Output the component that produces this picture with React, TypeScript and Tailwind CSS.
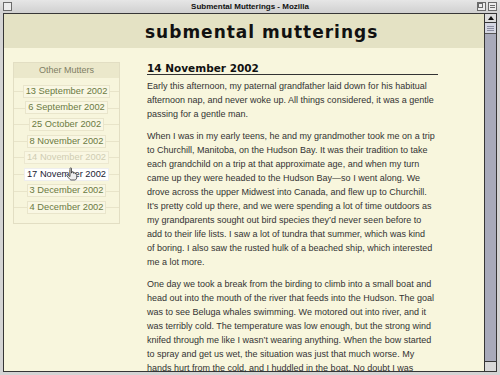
import React from "react";

const P1 = [
  "Early this afternoon, my paternal grandfather laid down for his habitual",
  "afternoon nap, and never woke up. All things considered, it was a gentle",
  "passing for a gentle man.",
];
const P2 = [
  "When I was in my early teens, he and my grandmother took me on a trip",
  "to Churchill, Manitoba, on the Hudson Bay. It was their tradition to take",
  "each grandchild on a trip at that approximate age, and when my turn",
  "came up they were headed to the Hudson Bay\u2014so I went along. We",
  "drove across the upper Midwest into Canada, and flew up to Churchill.",
  "It\u2019s pretty cold up there, and we were spending a lot of time outdoors as",
  "my grandparents sought out bird species they\u2019d never seen before to",
  "add to their life lists. I saw a lot of tundra that summer, which was kind",
  "of boring. I also saw the rusted hulk of a beached ship, which interested",
  "me a lot more.",
];
const P3 = [
  "One day we took a break from the birding to climb into a small boat and",
  "head out into the mouth of the river that feeds into the Hudson. The goal",
  "was to see Beluga whales swimming. We motored out into river, and it",
  "was terribly cold. The temperature was low enough, but the strong wind",
  "knifed through me like I wasn\u2019t wearing anything. When the bow started",
  "to spray and get us wet, the situation was just that much worse. My",
  "hands hurt from the cold, and I huddled in the boat. No doubt I was",
];

const ITEMS = [
  { t: "13 September 2002", s: "normal" },
  { t: "6 September 2002", s: "normal" },
  { t: "25 October 2002", s: "normal" },
  { t: "8 November 2002", s: "normal" },
  { t: "14 November 2002", s: "current" },
  { t: "17 November 2002", s: "hover" },
  { t: "3 December 2002", s: "normal" },
  { t: "4 December 2002", s: "normal" },
];

function Para({ lines, first }: { lines: string[]; first?: boolean }) {
  return (
    <p className={`${first ? "mt-[4px]" : "mt-[8px]"} text-[9px] leading-[14px] text-[#333333] whitespace-nowrap`}>
      {lines.map((l, i) => (
        <React.Fragment key={i}>
          {l}
          {i < lines.length - 1 && <br />}
        </React.Fragment>
      ))}
    </p>
  );
}

function HandCursor() {
  return (
    <svg width="12" height="14" viewBox="0 0 12 14" className="absolute left-[62px] top-[119px]">
      <path
        d="M4 1.5 C4 0.6 5.5 0.6 5.5 1.5 V6 H6 V5.2 C6 4.4 7.5 4.4 7.5 5.2 V6.2 H7.8 C7.8 5.5 9.3 5.5 9.3 6.3 V7 C9.3 6.5 10.8 6.5 10.8 7.3 V10 C10.8 11.6 9.9 13 8.8 13 H5.2 C4.3 13 3.4 11.8 2.4 10.6 L0.9 8.6 C0.4 7.9 1.4 7.2 2 7.8 L4 9.6 Z"
        fill="#eeeeee"
        stroke="#333"
        strokeWidth="0.8"
      />
    </svg>
  );
}

export default function App() {
  return (
    <div className="w-[500px] h-[375px] overflow-hidden bg-[#d4d4d4] flex flex-col font-['Liberation_Sans',Arial,sans-serif]">
      {/* title bar */}
      <div className="h-[13px] flex items-center bg-[linear-gradient(to_bottom,#e6e6e6,#d0d0d0)]">
        <div className="w-[40px] flex pl-[3px]">
          <div className="w-[9px] h-[9px] border border-[#6a6a6a] bg-[#ececec]" />
        </div>
        <div className="flex-1 text-center text-[8px] font-bold leading-[13px] text-[#111]">
          Submental Mutterings - Mozilla
        </div>
        <div className="w-[40px] flex justify-end gap-[2px] pr-[3px]">
          <div className="w-[9px] h-[9px] border border-[#6a6a6a] bg-[#ececec] flex items-start justify-start">
            <div className="w-[5px] h-[5px] border border-[#6a6a6a]" />
          </div>
          <div className="w-[9px] h-[9px] border border-[#6a6a6a] bg-[#ececec] flex flex-col justify-center gap-[1px] px-[1px]">
            <div className="h-px bg-[#6a6a6a]" />
            <div className="h-px bg-[#6a6a6a]" />
          </div>
        </div>
      </div>

      {/* window frame */}
      <div className="flex-1 min-h-0 mx-[3px] mb-[3px] border border-[#363636] flex">
        <div className="flex-1 min-w-0 flex flex-col bg-[#f8f6dd] relative">
          <div className="h-[34px] shrink-0 bg-[#e4e2c4] flex items-center pl-[141px] pt-[3px]">
            <div className="font-['DejaVu_Sans',sans-serif] font-bold text-[17px] tracking-[1px] text-[#111] leading-none">
              submental mutterings
            </div>
          </div>

          <div className="flex pt-[14px] pl-[9px] relative">
            <div className="w-[107px] shrink-0 self-start border border-[#e2dec3] bg-[#f7f5dc]">
              <div className="h-[15px] bg-[#ebe8cb] text-center text-[9px] leading-[15px] text-[#807e64]">
                Other Mutters
              </div>
              <div className="pt-[5px] pb-[7px]">
                {ITEMS.map((it) => (
                  <div
                    key={it.t}
                    className="h-[16.6px] flex items-center justify-center bg-[linear-gradient(to_bottom,transparent_8px,#e8e4c9_8px,#e8e4c9_9px,transparent_9px)]"
                  >
                    <span
                      className={`px-[2px] text-[9.3px] leading-[11px] border ${
                        it.s === "hover"
                          ? "bg-white border-[#eeeeee] text-[#222233]"
                          : it.s === "current"
                          ? "bg-[#f9f7e3] border-[#ece8d0] text-[#cfcdb2]"
                          : "bg-[#f9f7e3] border-[#e9e5cb] text-[#6b7a42]"
                      }`}
                    >
                      {it.t}
                    </span>
                  </div>
                ))}
              </div>
            </div>
            <HandCursor />

            <div className="ml-[27px] w-[291px] shrink-0">
              <h2 className="font-['DejaVu_Sans',sans-serif] font-bold text-[10.5px] leading-[12px] text-[#111] border-b border-[#333]">
                14 November 2002
              </h2>
              <Para lines={P1} first />
              <Para lines={P2} />
              <Para lines={P3} />
            </div>
          </div>
        </div>

        {/* scrollbar */}
        <div className="w-[12px] shrink-0 border-l border-[#363636] flex flex-col bg-[#a8aaba]">
          <div className="h-[9px] bg-[#dcdcdc] border-b border-[#363636] flex items-center justify-center">
            <div className="w-0 h-0 border-l-[3px] border-r-[3px] border-b-[4px] border-l-transparent border-r-transparent border-b-[#111]" />
          </div>
          <div className="h-[11px] bg-[#d4d6e2] border-b border-[#555] flex flex-col justify-center gap-[1px] px-[2px]">
            <div className="h-px bg-[#8a8ca0]" />
            <div className="h-px bg-[#8a8ca0]" />
            <div className="h-px bg-[#8a8ca0]" />
          </div>
          <div className="flex-1" />
          <div className="h-[10px] border-t border-[#363636] bg-[#d8d8d8]" />
        </div>
      </div>
    </div>
  );
}
